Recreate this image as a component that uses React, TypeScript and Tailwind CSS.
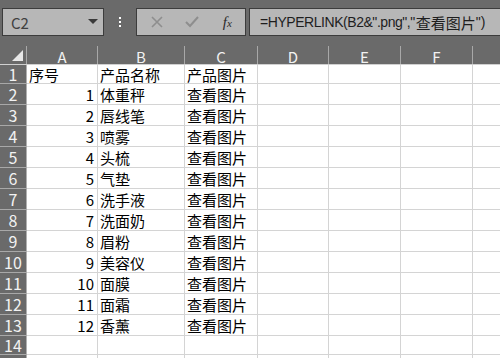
import React from "react";

const rows: [string, string, string][] = [
  ["序号", "产品名称", "产品图片"],
  ["1", "体重秤", "查看图片"],
  ["2", "唇线笔", "查看图片"],
  ["3", "喷雾", "查看图片"],
  ["4", "头梳", "查看图片"],
  ["5", "气垫", "查看图片"],
  ["6", "洗手液", "查看图片"],
  ["7", "洗面奶", "查看图片"],
  ["8", "眉粉", "查看图片"],
  ["9", "美容仪", "查看图片"],
  ["10", "面膜", "查看图片"],
  ["11", "面霜", "查看图片"],
  ["12", "香薰", "查看图片"],
  ["", "", ""],
  ["", "", ""],
];

const font = { fontFamily: '"Noto Sans CJK SC", "Noto Sans", sans-serif' };
const latin = { fontFamily: '"Liberation Sans", "Noto Sans CJK SC", sans-serif' };

export default function App() {
  const heights = rows.map((_, i) => (i === 0 || i === 13 ? 19 : 21));
  return (
    <div className="w-[500px] h-[358px] overflow-hidden bg-white" style={font}>
      {/* toolbar */}
      <div className="h-[46px] bg-[#6a6a6a] flex items-start pt-[8px] pl-[2px]">
        <div className="w-[102px] h-[28px] border border-[#3c3c3c] bg-[#b7b7b7] flex items-center justify-between pl-[8px] pr-[5px] shrink-0">
          <span className="text-[15px] text-[#404040] leading-none">C2</span>
          <svg width="10" height="6" viewBox="0 0 10 6">
            <path d="M0 0 L10 0 L5 5 Z" fill="#3a3a3a" />
          </svg>
        </div>
        <div className="w-[32px] h-[28px] flex flex-col items-center justify-center gap-[2px] shrink-0">
          <div className="w-[2px] h-[2px] bg-white" />
          <div className="w-[2px] h-[2px] bg-white" />
          <div className="w-[2px] h-[2px] bg-white" />
        </div>
        <div className="w-[110px] h-[28px] border border-[#3c3c3c] bg-[#b7b7b7] flex items-center shrink-0">
          <div className="w-[36px] flex justify-center ml-[2px]">
            <svg width="12" height="12" viewBox="0 0 12 12">
              <path d="M1 1 L11 11 M11 1 L1 11" stroke="#8e8e8e" strokeWidth="1.6" />
            </svg>
          </div>
          <div className="w-[36px] flex justify-center">
            <svg width="14" height="12" viewBox="0 0 14 12">
              <path d="M1 6 L5 10 L13 1" stroke="#8e8e8e" strokeWidth="2" fill="none" />
            </svg>
          </div>
          <div className="w-[36px] flex justify-center">
            <span
              className="text-[15px] text-[#2a2a2a] italic leading-none"
              style={{ fontFamily: '"Liberation Serif", serif' }}
            >
              f<span className="text-[11px]">x</span>
            </span>
          </div>
        </div>
        <div className="ml-[3px] flex-1 h-[28px] border border-r-0 border-[#3c3c3c] bg-[#b7b7b7] flex items-center pl-[10px] overflow-hidden whitespace-nowrap">
          <span className="text-[14px] tracking-[-0.45px] text-[#1e1e1e] leading-none" style={latin}>
            =HYPERLINK(B2&amp;".png","
          </span>
          <span className="text-[15px] text-[#1e1e1e] leading-none ml-[1px]" style={font}>
            查看图片
          </span>
          <span className="text-[14px] text-[#1e1e1e] leading-none" style={latin}>
            ")
          </span>
        </div>
      </div>

      {/* column headers */}
      <div className="flex h-[19px] bg-[#6a6a6a] border-b border-[#d0d0d0]">
        <div className="w-[27px] shrink-0 border-r border-[#a8a8a8] relative">
          <svg className="absolute left-[12px] top-[4px]" width="11" height="11" viewBox="0 0 11 11">
            <path d="M11 0 L11 11 L0 11 Z" fill="#e8e8e8" />
          </svg>
        </div>
        {[
          ["A", 71],
          ["B", 87],
          ["C", 73],
          ["D", 71],
          ["E", 72],
          ["F", 72],
        ].map(([l, w]) => (
          <div
            key={l as string}
            className="shrink-0 border-r border-[#a8a8a8] flex items-center justify-center text-[15px] text-[#f2f2f2] leading-none pt-[2px]"
            style={{ width: w as number }}
          >
            {l}
          </div>
        ))}
        <div className="flex-1" />
      </div>

      {/* rows */}
      {rows.map((r, i) => (
        <div key={i} className="flex" style={{ height: heights[i] }}>
          <div className="w-[27px] shrink-0 bg-[#6a6a6a] border-r border-b border-r-[#b0b0b0] border-b-[#a8a8a8] flex items-center justify-center text-[16px] text-[#f2f2f2] leading-none">
            {i < 14 ? i + 1 : ""}
          </div>
          <div className="w-[71px] shrink-0 border-r border-b border-[#d4d4d4] flex items-center text-[15px] text-black leading-none">
            {i === 0 ? (
              <span className="pl-[2px]">{r[0]}</span>
            ) : (
              <span className="ml-auto pr-[3px]">{r[0]}</span>
            )}
          </div>
          <div className="w-[87px] shrink-0 border-r border-b border-[#d4d4d4] flex items-center pl-[2px] text-[15px] text-black leading-none">
            {r[1]}
          </div>
          <div className="w-[73px] shrink-0 border-r border-b border-[#d4d4d4] flex items-center pl-[2px] text-[15px] text-black leading-none whitespace-nowrap overflow-hidden">
            {r[2]}
          </div>
          <div className="w-[71px] shrink-0 border-r border-b border-[#d4d4d4]" />
          <div className="w-[72px] shrink-0 border-r border-b border-[#d4d4d4]" />
          <div className="w-[72px] shrink-0 border-r border-b border-[#d4d4d4]" />
          <div className="flex-1 border-b border-[#d4d4d4]" />
        </div>
      ))}
    </div>
  );
}
